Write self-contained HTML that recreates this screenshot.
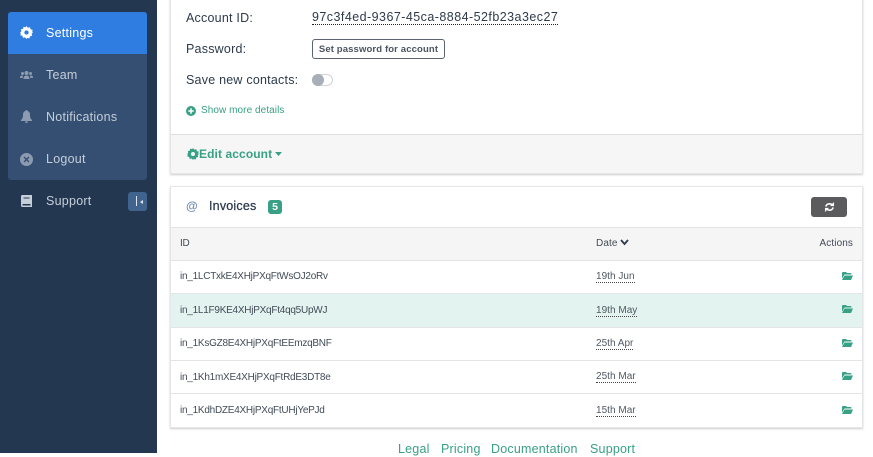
<!DOCTYPE html>
<html><head><meta charset="utf-8">
<style>
html,body{margin:0;padding:0}
body{width:873px;height:453px;overflow:hidden;position:relative;background:#fff;font-family:"Liberation Sans",sans-serif;color:#2d3748}
.a{position:absolute;white-space:nowrap}
#side{left:0;top:0;width:157px;height:453px;background:#233750}
#panel{left:8px;top:12px;width:139px;height:168px;background:#344f72;border-radius:3px}
#active{left:8px;top:12px;width:139px;height:42px;background:#2f7de1;border-radius:3px 3px 0 0}
.nav{left:46px;font-size:12.5px;line-height:16px;color:#c5ced9;letter-spacing:.25px}
.lab{left:186px;font-size:12.5px;line-height:16px;color:#2d3a4b;letter-spacing:.22px}
.card{background:#fff;box-shadow:0 1px 2px rgba(0,0,0,.2);border:1px solid #e4e6e8;box-sizing:border-box}
.row{left:171px;width:691px;height:33px;border-bottom:1px solid #e3e5e7;box-sizing:border-box}
.id{left:180px;font-size:10px;line-height:12px;color:#424b57;letter-spacing:-.25px}
.dt{left:596px;font-size:10px;line-height:11px;color:#505862;letter-spacing:.02px;border-bottom:1px dotted #444}
.fo{top:441px;font-size:12.5px;line-height:16px;color:#38a085;letter-spacing:.2px}
svg{position:absolute;display:block}
</style></head><body>
<div class="a" id="side"></div>
<div class="a" id="panel"></div>
<div class="a" id="active"></div>

<svg style="left:20px;top:26px" width="13" height="13" viewBox="0 0 24 24"><path fill="#fff" fill-rule="evenodd" d="M12 0l2.500 3.200 4-.9 1 3.900 3.900 1-.9 4L24 12l-2.500 2.200.9 3.900-3.900 1-1 3.800-4-.9L12 24l-2.500-3-4 .9-1-3.800-3.900-1 .9-3.900L0 12l2.500-1.800-.9-4 3.900-1 1-3.900 4 .9zM12 8a4 4 0 100 8 4 4 0 000-8z"/></svg>
<div class="a nav" style="top:25px;color:#fff">Settings</div>

<svg style="left:20px;top:70px" width="13" height="10" viewBox="0 0 26 20"><g fill="#8d9bb0"><circle cx="13" cy="6" r="4"/><circle cx="5" cy="7" r="3"/><circle cx="21" cy="7" r="3"/><path d="M7 18c0-5 2-7 6-7s6 2 6 7zM0 15c0-3 2-4 5-4l1 1-1 4H0zM26 15c0-3-2-4-5-4l-1 1 1 4h5z"/></g></svg>
<div class="a nav" style="top:67px">Team</div>

<svg style="left:21px;top:110px" width="11" height="13" viewBox="0 0 22 26"><path fill="#8d9bb0" d="M11 0c1.500 0 2 1 2 2 4 1 5 4 5 8 0 5 1 7 4 10v2H0v-2c3-3 4-5 4-10 0-4 1-7 5-8 0-1 .5-2 2-2zM8 23h6c0 2-1 3-3 3s-3-1-3-3z"/></svg>
<div class="a nav" style="top:109px">Notifications</div>

<svg style="left:20px;top:153px" width="13" height="13" viewBox="0 0 26 26"><path fill="#8d9bb0" fill-rule="evenodd" d="M13 0a13 13 0 110 26 13 13 0 010-26zM9 7L7 9l4 4-4 4 2 2 4-4 4 4 2-2-4-4 4-4-2-2-4 4z"/></svg>
<div class="a nav" style="top:151px">Logout</div>

<svg style="left:21px;top:195px" width="11" height="12" viewBox="0 0 22 24"><path fill="#c5ced9" fill-rule="evenodd" d="M3 0h19v24H3c-2 0-3-1-3-3V3c0-2 1-3 3-3zM5 5v2h12V5zM3 18v3h16v-3z"/></svg>
<div class="a nav" style="top:193px">Support</div>
<div class="a" style="left:128px;top:192px;width:19px;height:19px;background:#41648f;border-radius:3px"></div>
<div class="a" style="left:136px;top:196px;width:1px;height:10px;background:#dfe6ee"></div>
<svg style="left:139.500px;top:200px" width="3" height="4" viewBox="0 0 3 4"><path fill="#dfe6ee" d="M3 0v4L0 2z"/></svg>

<!-- account card -->
<div class="a card" style="left:170px;top:-10px;width:693px;height:184px"></div>
<div class="a" style="left:171px;top:134px;width:691px;height:39px;background:#f6f6f6;border-top:1px solid #dcdedf;box-sizing:border-box"></div>
<div class="a lab" style="top:10px">Account ID:</div>
<div class="a" style="left:312px;top:10px;font-size:12.5px;line-height:14px;color:#2d3a4b;letter-spacing:.45px;border-bottom:1px dotted #222">97c3f4ed-9367-45ca-8884-52fb23a3ec27</div>
<div class="a lab" style="top:41px">Password:</div>
<div class="a" style="left:312px;top:39px;width:133px;height:20px;border:1px solid #5b6470;border-radius:3px;box-sizing:border-box;font-size:9.500px;font-weight:bold;line-height:19px;color:#4a5460;text-align:center;letter-spacing:.13px">Set password for account</div>
<div class="a lab" style="top:72px">Save new contacts:</div>
<div class="a" style="left:312px;top:74px;width:21px;height:12px;border:1px solid #cfd3d8;border-radius:6px;box-sizing:border-box;background:#fff"></div>
<div class="a" style="left:312px;top:74px;width:12px;height:12px;border-radius:6px;background:#a9afb9"></div>
<svg style="left:186px;top:106px" width="10" height="10" viewBox="0 0 20 20"><path fill="#38a085" fill-rule="evenodd" d="M10 0a10 10 0 110 20 10 10 0 010-20zM8.500 4.500v4h-4v3h4v4h3v-4h4v-3h-4v-4z"/></svg>
<div class="a" style="left:201px;top:104px;font-size:10px;line-height:14px;color:#38a085;letter-spacing:.07px">Show more details</div>
<svg style="left:187px;top:148px" width="12" height="12" viewBox="0 0 24 24"><path fill="#38a085" fill-rule="evenodd" d="M12 0l2.500 3.200 4-.9 1 3.900 3.900 1-.9 4L24 12l-2.500 2.200.9 3.900-3.900 1-1 3.800-4-.9L12 24l-2.500-3-4 .9-1-3.800-3.900-1 .9-3.900L0 12l2.500-1.800-.9-4 3.900-1 1-3.900 4 .9zM12 8a4 4 0 100 8 4 4 0 000-8z"/></svg>
<div class="a" style="left:199px;top:147px;font-size:12px;font-weight:bold;line-height:15px;color:#38a085;letter-spacing:.1px">Edit account</div>
<svg style="left:275px;top:152px" width="7" height="4" viewBox="0 0 7 4"><path fill="#38a085" d="M0 0h7L3.500 4z"/></svg>

<!-- invoices card -->
<div class="a card" style="left:170px;top:186px;width:693px;height:242px"></div>
<div class="a" style="left:186px;top:199px;font-size:12px;line-height:15px;color:#6f8cb0;font-weight:bold">@</div>
<div class="a" style="left:209px;top:199px;font-size:12.500px;line-height:15px;color:#2d3a4b;letter-spacing:.2px;-webkit-text-stroke:.25px #2d3a4b">Invoices</div>
<div class="a" style="left:268px;top:200px;width:14px;height:14px;background:#38a085;border-radius:3px;color:#fff;font-size:10.500px;font-weight:bold;line-height:14px;text-align:center">5</div>
<div class="a" style="left:811px;top:197px;width:36px;height:20px;background:#5b5b5d;border-radius:3px"></div>
<svg style="left:824px;top:202px" width="11" height="10" viewBox="0 0 22 22"><g fill="none" stroke="#fff" stroke-width="3.500"><path d="M3 10c1-4 4-6 8-6 3 0 5 1 7 3"/><path d="M19 12c-1 4-4 6-8 6-3 0-5-1-7-3"/></g><path fill="#fff" d="M21 0v9h-9zM1 22v-9h9z"/></svg>

<div class="a" style="left:171px;top:227px;width:691px;height:34px;background:#f5f5f5;border-top:1px solid #e3e5e7;border-bottom:1px solid #e3e5e7;box-sizing:border-box"></div>
<div class="a id" style="top:238px">ID</div>
<div class="a" style="left:596px;top:238px;font-size:10px;line-height:12px;color:#424b57;letter-spacing:.1px">Date</div>
<svg style="left:620px;top:239px" width="9" height="7" viewBox="0 0 9 7"><path fill="none" stroke="#2d3a4b" stroke-width="1.800" d="M1 1l3.500 4L8 1"/></svg>
<div class="a" style="right:20px;top:238px;font-size:10px;line-height:12px;color:#424b57;letter-spacing:.1px">Actions</div>

<div class="a row" style="top:261px"></div>
<div class="a row" style="top:294px;height:34px;background:#e3f3ef"></div>
<div class="a row" style="top:328px"></div>
<div class="a row" style="top:361px"></div>

<div class="a id" style="top:271px">in_1LCTxkE4XHjPXqFtWsOJ2oRv</div>
<div class="a id" style="top:305px">in_1L1F9KE4XHjPXqFt4qq5UpWJ</div>
<div class="a id" style="top:338px">in_1KsGZ8E4XHjPXqFtEEmzqBNF</div>
<div class="a id" style="top:372px">in_1Kh1mXE4XHjPXqFtRdE3DT8e</div>
<div class="a id" style="top:405px">in_1KdhDZE4XHjPXqFtUHjYePJd</div>

<div class="a dt" style="top:271px">19th Jun</div>
<div class="a dt" style="top:305px">19th May</div>
<div class="a dt" style="top:338px">25th Apr</div>
<div class="a dt" style="top:371px">25th Mar</div>
<div class="a dt" style="top:405px">15th Mar</div>

<svg style="left:842px;top:272px" width="11" height="8" viewBox="0 0 22 16"><path fill="#38a085" d="M0 2c0-1 1-2 2-2h6l2 2h7c1 0 2 1 2 2v1H5L0 13zM5 7h17l-4 9H0z"/></svg>
<svg style="left:842px;top:305px" width="11" height="8" viewBox="0 0 22 16"><path fill="#38a085" d="M0 2c0-1 1-2 2-2h6l2 2h7c1 0 2 1 2 2v1H5L0 13zM5 7h17l-4 9H0z"/></svg>
<svg style="left:842px;top:339px" width="11" height="8" viewBox="0 0 22 16"><path fill="#38a085" d="M0 2c0-1 1-2 2-2h6l2 2h7c1 0 2 1 2 2v1H5L0 13zM5 7h17l-4 9H0z"/></svg>
<svg style="left:842px;top:372px" width="11" height="8" viewBox="0 0 22 16"><path fill="#38a085" d="M0 2c0-1 1-2 2-2h6l2 2h7c1 0 2 1 2 2v1H5L0 13zM5 7h17l-4 9H0z"/></svg>
<svg style="left:842px;top:406px" width="11" height="8" viewBox="0 0 22 16"><path fill="#38a085" d="M0 2c0-1 1-2 2-2h6l2 2h7c1 0 2 1 2 2v1H5L0 13zM5 7h17l-4 9H0z"/></svg>

<div class="a fo" style="left:398px">Legal</div>
<div class="a fo" style="left:441px">Pricing</div>
<div class="a fo" style="left:491px">Documentation</div>
<div class="a fo" style="left:590px">Support</div>
</body></html>
